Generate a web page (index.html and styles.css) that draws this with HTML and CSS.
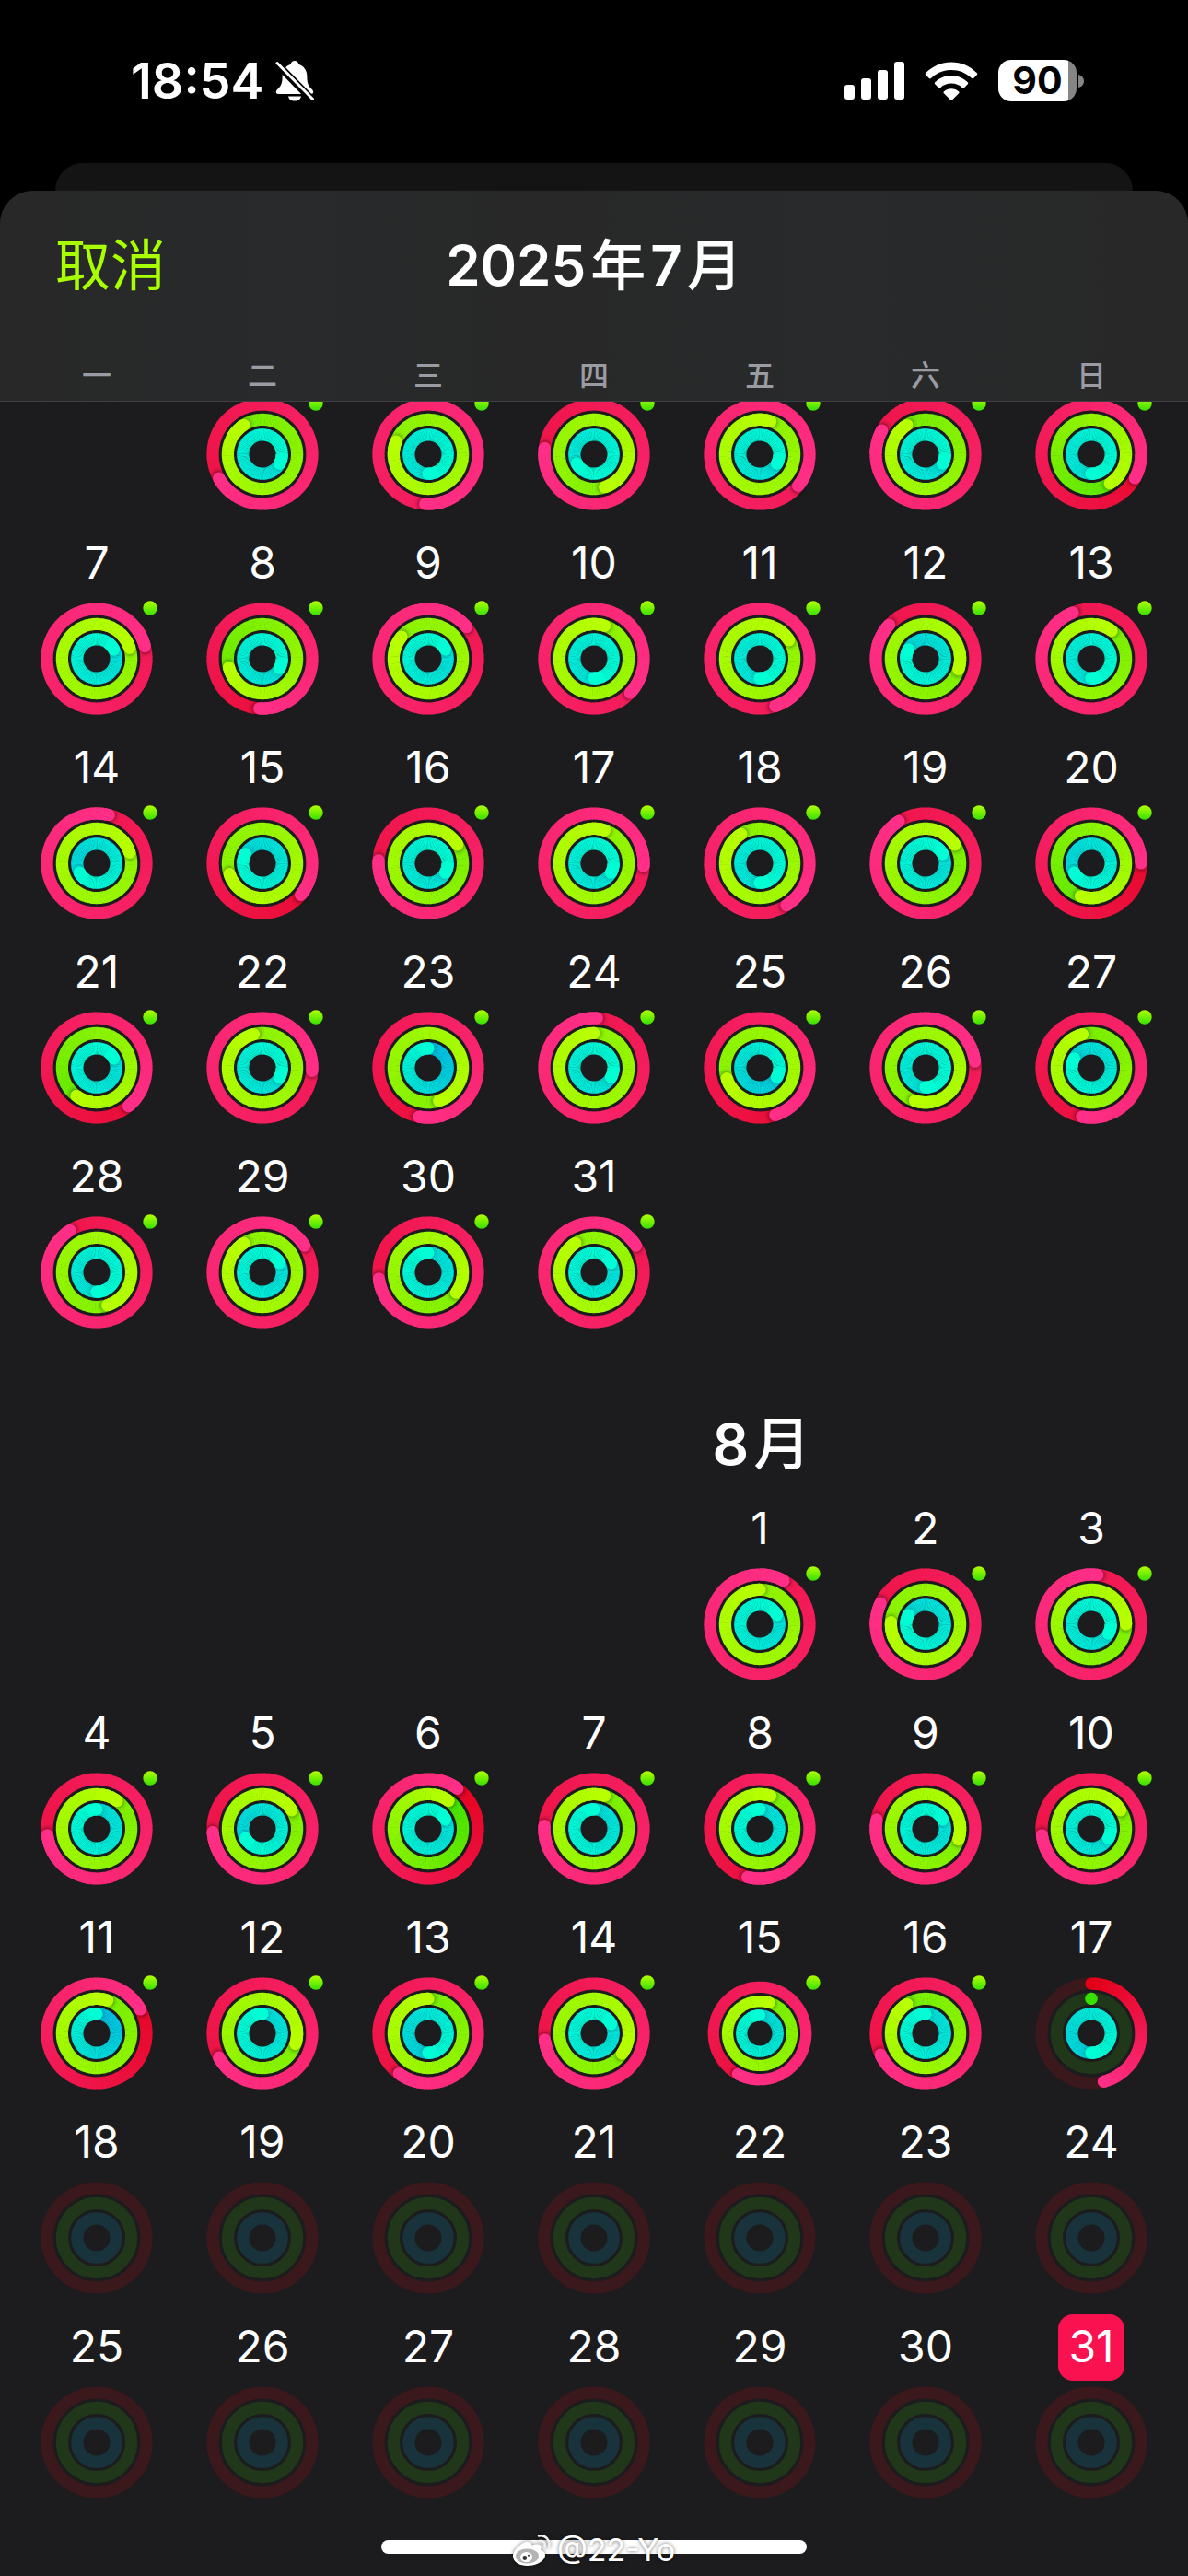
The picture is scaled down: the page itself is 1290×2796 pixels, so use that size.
FILE: index.html
```html
<!DOCTYPE html>
<html lang="zh-CN">
<head>
    <meta charset="UTF-8">
    <meta name="viewport" content="width=device-width, initial-scale=1.0">
    <title>2025年7月</title>
    <link rel="stylesheet" href="styles.css">
</head>
<body>
    <!-- Status bar -->
    <div class="status-bar">
        <div class="status-left">
            <span class="time">18:54</span>
            <svg class="bell" viewBox="0 0 42 45">
                <path d="M21 1c-2.400 0-4 1.600-4.300 3.800C10.500 6.800 7.600 12 7.600 18.500c0 6.500-1.400 9.500-4.200 12.300C1.500 32.700.8 33.600.8 35c0 1.300 1 2 2.600 2h35.200c1.600 0 2.600-.7 2.600-2 0-1.400-.7-2.300-2.600-4.200-2.800-2.800-4.200-5.800-4.200-12.300 0-6.500-2.900-11.700-9.100-13.700C25 2.600 23.400 1 21 1z" fill="#fff"/>
                <path d="M14 39.500h14c-.5 3-3.300 5-7 5s-6.500-2-7-5z" fill="#fff"/>
                <path d="M1 3.500L39.500 43" stroke="#000" stroke-width="8"/>
                <path d="M2 3.500L40.500 42.500" stroke="#fff" stroke-width="3" stroke-linecap="round"/>
            </svg>
        </div>
        <div class="status-right">
            <svg class="signal" viewBox="0 0 65 41">
                <rect x="0" y="25" width="11" height="16" rx="3"/>
                <rect x="18" y="18" width="11" height="23" rx="3"/>
                <rect x="36" y="9" width="11" height="32" rx="3"/>
                <rect x="54" y="0" width="11" height="41" rx="3"/>
            </svg>
            <svg class="wifi" viewBox="0 0 58 42">
                <path d="M1.200 12.200C8.500 4.700 18.300.4 29 .4s20.500 4.300 27.800 11.800c.6.600.6 1.400 0 2l-3.700 3.800c-.6.600-1.400.6-2 0C45.300 12.300 37.500 9 29 9S12.700 12.300 6.900 18c-.6.600-1.400.6-2 0l-3.700-3.800c-.6-.6-.6-1.400 0-2z"/>
                <path d="M11.200 22.300C15.900 17.700 22.100 15 29 15s13.100 2.700 17.800 7.300c.6.600.6 1.400 0 2l-3.900 3.900c-.6.600-1.400.6-2 0C37.700 25.200 33.600 23.600 29 23.600s-8.700 1.600-11.900 4.600c-.6.600-1.400.6-2 0l-3.900-3.900c-.6-.6-.6-1.400 0-2z"/>
                <path d="M21 32.300c2.200-1.900 5-3 8-3s5.800 1.100 8 3c.7.600.7 1.400.1 2l-7 7c-.7.700-1.500.7-2.200 0l-7-7c-.6-.6-.6-1.400.1-2z"/>
            </svg>
            <div class="battery">
                <span class="battery-level">90</span>
                <svg class="battery-tip" viewBox="0 0 6 14"><path d="M0 0c4 1 6 4 6 7s-2 6-6 7z"/></svg>
            </div>
        </div>
    </div>

    <!-- Card that sits behind the sheet -->
    <div class="back-card"></div>

    <main class="sheet">
        <header class="sheet-header">
            <div class="title-row">
                <button class="cancel" type="button">取消</button>
                <h1><span class="digits">2025</span>年<span class="digits">7</span>月</h1>
            </div>
            <div class="weekdays">
                <span>一</span>
                <span>二</span>
                <span>三</span>
                <span>四</span>
                <span>五</span>
                <span>六</span>
                <span>日</span>
            </div>
        </header>

        <div class="calendar" id="calendar">
            <section class="month july" id="july"></section>
            <section class="month august" id="august">
                <h2><span class="digits">8</span>月</h2>
            </section>
        </div>
    </main>

    <div class="home-indicator"></div>

    <div class="watermark">
        <svg class="weibo" viewBox="0 0 42 34">
            <path d="M17 8c-5-2-17 8-17 15.500C0 30 7.500 34 15.500 34 27 34 35 28 35 22.500c0-3.400-2.500-5-5-5.800 1.300-3.200.2-5.700-3-6.200-2.200-.3-4.600.4-6.800 1.300C20.800 10 20 8.400 17 8z" fill="#fff"/>
            <ellipse cx="15.500" cy="23.500" rx="12.500" ry="8" fill="#b4b4b4"/>
            <ellipse cx="14.500" cy="24.500" rx="6.500" ry="5.500" fill="#fff"/>
            <circle cx="12.800" cy="25.500" r="2.400" fill="#333"/>
            <circle cx="17" cy="22.800" r="1" fill="#333"/>
            <path d="M28 1.500c7-1.500 13 4.500 11 12M29 7c4-.8 6.500 2 5.500 6" fill="none" stroke="#f2f2f2" stroke-width="2.400" stroke-linecap="round"/>
        </svg>
        <span>@22-Yo</span>
    </div>

    <script src="script.js"></script>
</body>
</html>
```
FILE: styles.css
```css
* {
    box-sizing: border-box;
}

body {
    margin: 0;
    height: 100vh;
    display: flex;
    flex-direction: column;
    position: relative;
    overflow: hidden;
    background: #000;
    color: #fff;
    font-family: Inter, "Noto Sans CJK SC", sans-serif;
}

button {
    padding: 0;
    border: 0;
    background: none;
    color: inherit;
    font: inherit;
    cursor: pointer;
}

/* Status bar */
.status-bar {
    display: flex;
    justify-content: space-between;
    align-items: center;
    height: 177px;
    padding: 0 113px 2px 142px;
    flex-shrink: 0;
}

.status-left,
.status-right {
    display: flex;
    align-items: center;
}

.status-left {
    gap: 12px;
}

.status-right {
    gap: 22px;
    fill: #fff;
}

.time {
    font-size: 54px;
    line-height: 60px;
    font-weight: 600;
}

.bell {
    width: 42px;
    height: 45px;
}

.signal {
    width: 65px;
    height: 41px;
}

.wifi {
    width: 58px;
    height: 42px;
}

.battery {
    display: flex;
    align-items: center;
    gap: 2px;
}

.battery-level {
    width: 85px;
    height: 45px;
    border-radius: 14px;
    background: linear-gradient(90deg, #fff 90%, #858585 90%);
    color: #000;
    font-size: 41px;
    line-height: 45px;
    font-weight: 700;
    text-align: center;
}

.battery-tip {
    width: 6px;
    height: 14px;
    fill: #858585;
}

/* Sheet */
.back-card {
    height: 30px;
    margin: 0 60px;
    border-radius: 30px 30px 0 0;
    background: #141414;
    flex-shrink: 0;
}

.sheet {
    flex: 1;
    min-height: 0;
    display: flex;
    flex-direction: column;
    border-radius: 36px 36px 0 0;
    overflow: hidden;
    background: #1c1c1e;
}

.sheet-header {
    padding: 36px 0 4px;
    border-bottom: 1px solid #3f3f41;
    background: linear-gradient(90deg, #282828, #282a2b 25%, #282828 45%, #282a2b 70%, #282828);
}

.title-row {
    display: grid;
    grid-template-columns: 1fr auto 1fr;
    align-items: center;
    padding: 0 60px;
    line-height: 90px;
}

.cancel {
    justify-self: start;
    color: #a8ff00;
    font-size: 60px;
    line-height: 90px;
}

h1,
h2 {
    margin: 0;
    font-weight: 500;
}

h1 {
    font-size: 60px;
    line-height: 90px;
}

.digits {
    margin-right: 5px;
    font-weight: 600;
}

.digits + .digits {
    margin-left: 5px;
}

.weekdays {
    display: grid;
    grid-template-columns: repeat(7, 1fr);
    margin-top: 52px;
    padding: 0 15px;
    color: #9b9ba3;
    font-size: 32px;
    line-height: 46px;
    font-weight: 500;
    text-align: center;
}

/* Calendar */
.calendar {
    flex: 1;
    min-height: 0;
    overflow-y: auto;
    scrollbar-width: none;
    padding: 0 15px 80px;
}

.month {
    display: grid;
    grid-template-columns: repeat(7, 1fr);
}

.july .day:first-child {
    grid-column-start: 2;
}

/* takes the rest of the row, text stays over the first day */
.august h2 {
    grid-column: 5 / -1;
    padding: 64px 66% 16px 0;
    font-size: 62px;
    line-height: 80px;
    text-align: center;
    white-space: nowrap;
}

.august h2 + .day {
    grid-column-start: 5;
}

.day {
    display: flex;
    flex-direction: column;
    align-items: center;
    gap: 6px;
    padding-bottom: 22px;
}

.number {
    width: 72px;
    height: 72px;
    font-size: 48px;
    line-height: 70px;
    text-align: center;
}

.day.selected .number {
    border-radius: 16px;
    background: #fa114f;
}

.rings {
    width: 122px;
    height: 122px;
    overflow: visible;
}

.rings circle,
.rings path {
    fill: none;
}

.rings .cap {
    fill: var(--color);
}

.rings .shadow {
    fill: #000;
    filter: blur(2px);
}

/* Bottom overlays */
.home-indicator {
    position: absolute;
    bottom: 24px;
    left: 50%;
    width: 462px;
    height: 15px;
    margin-left: -231px;
    border-radius: 8px;
    background: #fff;
}

.watermark {
    position: absolute;
    bottom: 8px;
    left: 0;
    right: 0;
    display: flex;
    justify-content: center;
    align-items: center;
    gap: 6px;
    font-size: 34px;
    line-height: 40px;
    text-shadow: 0 0 4px rgba(0, 0, 0, 0.6);
}

.weibo {
    width: 42px;
    height: 34px;
    filter: drop-shadow(0 0 2px rgba(0, 0, 0, 0.5));
}
```
FILE: script.js
```js
const SVG_NS = 'http://www.w3.org/2000/svg';

// Move, exercise and stand, from the outside in
const RINGS = [
    { radius: 54, from: [226, 0, 24], to: [255, 47, 135], track: '#3a181c', shadow: 0.45 },
    { radius: 37.6, from: [56, 224, 0], to: [184, 255, 0], track: '#203819', shadow: 0.35 },
    { radius: 21.2, from: [0, 186, 226], to: [0, 255, 212], track: '#18333b', shadow: 0.15 }
];
const THICKNESS = 13.2;

// Laps completed on each ring, one entry per day
const JULY = [
    [1.67, 1.91, 2.33], [2.51, 2.81, 2.5], [1.77, 2.45, 2.67], [2.36, 3.05, 2.33], [1.83, 1.91, 2.33], [1.33, 1.41, 2.5],
    [2.21, 3.2, 2.17], [1.51, 1.71, 2.33], [2.14, 2.86, 2.17], [2.37, 3.05, 2.5], [2.45, 3.16, 2.5], [1.87, 2.3, 1.83], [1.94, 2.1, 2.5],
    [2.04, 3.2, 1.67], [1.36, 2.7, 1.83], [1.76, 2.16, 2.33], [2.26, 3.05, 2.33], [2.41, 2.91, 2.5], [1.91, 2.16, 2.17], [1.25, 1.55, 1.67],
    [1.39, 1.6, 2.17], [2.26, 2.96, 2.33], [1.53, 2.45, 1], [2.01, 3, 2.33], [1.45, 2.7, 1.33], [2.23, 2.55, 2.5], [1.53, 1.96, 1.83],
    [1.91, 2.45, 2.5], [2.16, 2.91, 2.17], [1.73, 2.35, 2], [2.16, 2.91, 2.17]
];
const AUGUST = [
    [2.08, 3, 2.17], [1.82, 2.76, 1.83], [2.02, 2.25, 2.33],
    [1.73, 2.1, 2], [1.74, 2.16, 1.67], [1.1, 1.1, 2.17], [1.76, 2.05, 2], [1.54, 2.05, 2], [1.78, 2.3, 2.17], [1.73, 2.16, 2.33],
    [1.17, 2.05, 1], [1.67, 2.3, 2], [1.6, 2, 1.5], [1.73, 2.35, 2.17], [1.58, 2.05, 2], [1.68, 1.91, 2], [0.46, 0, 1.5]
];

function add(parent, name, attrs) {
    const el = document.createElementNS(SVG_NS, name);
    for (const key in attrs) {
        el.setAttribute(key, attrs[key]);
    }
    parent.appendChild(el);
    return el;
}

function point(radius, laps) {
    const angle = laps * 2 * Math.PI;
    return [radius * Math.sin(angle), -radius * Math.cos(angle)];
}

function mix(ring, t) {
    return 'rgb(' + ring.from.map((c, i) => Math.round(c + (ring.to[i] - c) * t)).join(',') + ')';
}

function drawArc(svg, ring, start, end, total) {
    const step = 1 / 90;
    for (let a = start; a < end - 0.0001; a += step) {
        const b = Math.min(a + step, end);
        const [x1, y1] = point(ring.radius, a);
        const [x2, y2] = point(ring.radius, Math.min(b + 0.002, end));
        add(svg, 'path', {
            d: `M${x1} ${y1}A${ring.radius} ${ring.radius} 0 0 1 ${x2} ${y2}`,
            stroke: mix(ring, a / total),
            'stroke-width': THICKNESS
        });
    }
}

function drawCap(svg, ring, laps, color, className) {
    const [x, y] = point(ring.radius, laps);
    const cap = add(svg, 'circle', { cx: x, cy: y, r: THICKNESS / 2, class: className });
    cap.style.setProperty('--color', color);
    return cap;
}

function drawRing(svg, ring, laps) {
    if (laps === undefined || laps < 1) {
        add(svg, 'circle', { r: ring.radius, stroke: ring.track, 'stroke-width': THICKNESS });
    }
    if (laps === undefined) {
        return;
    }
    if (laps < 1) {
        drawCap(svg, ring, 0, mix(ring, 0), 'cap');
        drawArc(svg, ring, 0, laps, laps);
    } else {
        drawArc(svg, ring, laps - 1, laps, laps);
        // the head casts a small shadow on the lap under it
        const shadow = drawCap(svg, ring, laps + 1.5 / (2 * Math.PI * ring.radius), '', 'shadow');
        shadow.setAttribute('opacity', ring.shadow);
        drawArc(svg, ring, laps - 0.08, laps, laps);
    }
    drawCap(svg, ring, laps, laps ? mix(ring, 1) : mix(ring, 0), 'cap');
}

function addDay(month, number, laps) {
    const day = document.createElement('button');
    day.type = 'button';
    day.className = 'day';

    const label = document.createElement('span');
    label.className = 'number';
    label.textContent = number;
    day.appendChild(label);

    const svg = add(day, 'svg', { class: 'rings', viewBox: '-61 -61 122 122' });
    RINGS.forEach((ring, i) => drawRing(svg, ring, laps ? laps[i] : undefined));

    // Workout dot
    if (laps && laps[0] >= 1) {
        const dot = add(svg, 'circle', { cx: 58, cy: -55, r: 7.7 });
        dot.style.fill = 'url(#dot)';
    }

    month.appendChild(day);
    return { day, svg };
}

const defs = add(add(document.body, 'svg', { width: 0, height: 0, style: 'position:absolute' }), 'defs', {});
const gradient = add(defs, 'linearGradient', { id: 'dot', x1: 0, y1: 0, x2: 0, y2: 1 });
add(gradient, 'stop', { offset: 0, 'stop-color': '#b0ff00' });
add(gradient, 'stop', { offset: 1, 'stop-color': '#38e000' });

const july = document.getElementById('july');
const august = document.getElementById('august');

for (let i = 1; i <= 31; i++) {
    // the first week is scrolled under the header, its numbers are out of view
    addDay(july, i > 6 ? i : '', JULY[i - 1]);
}

for (let i = 1; i <= 31; i++) {
    const { day, svg } = addDay(august, i, AUGUST[i - 1]);
    if (i === 15) {
        // pressed state, drawn slightly smaller
        svg.querySelectorAll('circle, path').forEach(el => {
            if (!el.style.fill) {
                el.setAttribute('transform', 'scale(0.93)');
            }
        });
    }
    if (i === 31) {
        day.classList.add('selected');
    }
}

document.getElementById('calendar').scrollTop = 82;
```
